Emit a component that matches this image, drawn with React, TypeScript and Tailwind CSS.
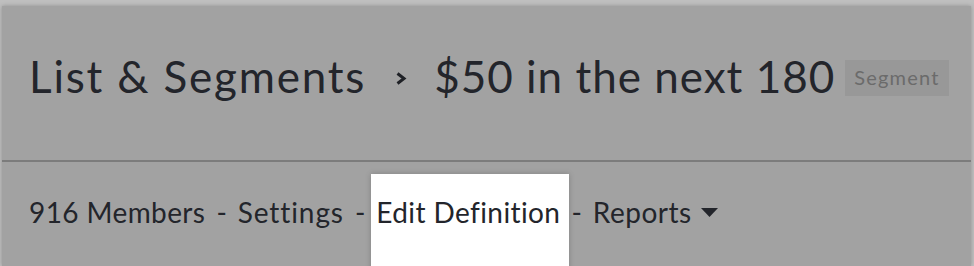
import React from "react";

const NAV = ["916 Members", "Settings", "Edit Definition", "Reports"];

const TRACK: Record<string, string> = {
  "916 Members": "tracking-[0.4px]",
  Settings: "tracking-[0.9px]",
  Reports: "tracking-[0.5px]",
};

function Caret() {
  return (
    <svg width="17" height="9" viewBox="0 0 17 9" className="ml-[9px] mt-[10px] shrink-0">
      <path d="M0 0 H17 L8.5 9 Z" fill="#23252b" />
    </svg>
  );
}

function Chevron() {
  return (
    <svg width="12" height="13" viewBox="0 0 12 13" className="ml-[29px] mr-[27px] mt-[18px] shrink-0">
      <path d="M2.5 1.5 L9 6.5 L2.5 11.5" fill="none" stroke="#1f2126" strokeWidth="3" />
    </svg>
  );
}

export default function App() {
  return (
    <div
      className="h-[266px] w-[974px] overflow-hidden bg-[#bfbfbf] pt-[6px]"
      style={{ fontFamily: "Lato, 'Open Sans', sans-serif" }}
    >
      <div className="ml-[2px] mr-[3px] h-full bg-[#a2a2a2] text-[#23252b] shadow-[0_0_4px_rgba(0,0,0,0.25)]">
        <div className="flex h-[156px] items-start border-b-2 border-[#7c7c7c] pl-[27px] pt-[48px]">
          <span className="text-[44px] leading-none tracking-[1.8px]">List &amp; Segments</span>
          <Chevron />
          <span className="text-[44px] leading-none tracking-[1px]">$50 in the next 180</span>
          <span className="ml-[10px] mt-[6px] bg-[#989898] px-[9px] pt-[7px] pb-[9px] text-[20px] leading-none tracking-[1.2px] text-[#6b6b6b]">
            Segment
          </span>
        </div>
        <div className="flex h-full items-start pl-[27px]">
          {NAV.map((item, i) => (
            <React.Fragment key={item}>
              {i > 0 && <span className="mx-[11px] mt-[36px] text-[28px] leading-none">-</span>}
              {item === "Edit Definition" ? (
                <span className="-ml-[5px] -mr-[9px] mt-[12px] h-[120px] bg-white pl-[5px] pr-[9px] pt-[24px] text-[28px] leading-none tracking-[0.4px] shadow-[0_0_6px_rgba(0,0,0,0.2)]">
                  {item}
                </span>
              ) : (
                <span className={`mt-[36px] flex items-start text-[28px] leading-none ${TRACK[item]}`}>
                  {item}
                  {item === "Reports" && <Caret />}
                </span>
              )}
            </React.Fragment>
          ))}
        </div>
      </div>
    </div>
  );
}
